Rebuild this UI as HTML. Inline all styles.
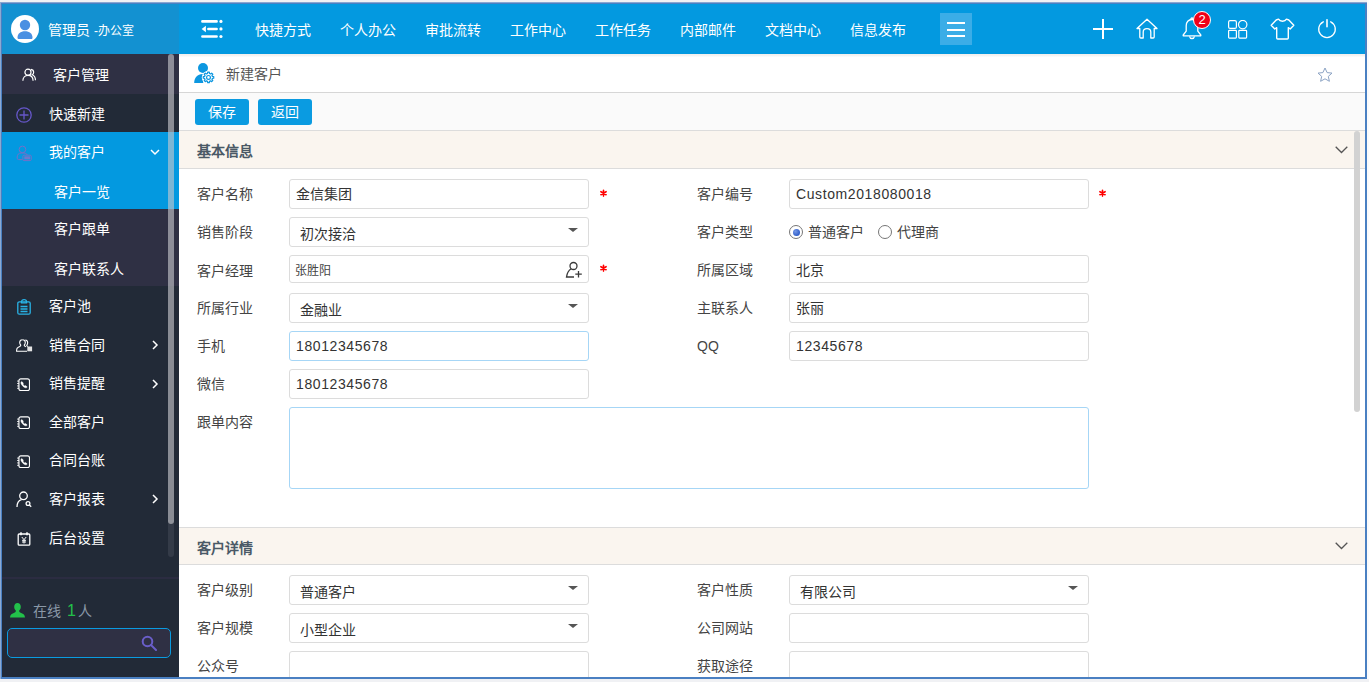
<!DOCTYPE html>
<html lang="zh-CN">
<head>
<meta charset="utf-8">
<title>新建客户</title>
<style>
*{box-sizing:border-box;margin:0;padding:0}
html,body{width:1369px;height:682px;overflow:hidden;background:#f0f1f4;font-family:"Liberation Sans",sans-serif;font-size:14px;color:#444}
.abs{position:absolute}
#frame{position:absolute;left:0;top:2px;width:1367px;height:677px;background:#4a80c2}
#app{position:absolute;left:2px;top:4px;width:1363px;height:673px;background:#fff;overflow:hidden}
/* header */
#hd{position:absolute;left:0;top:0;width:1363px;height:50px;background:#0399e0;color:#fff}
#hd .user{position:absolute;left:0;top:0;width:177px;height:50px;background:#1391d1}
#hd .avatar{position:absolute;left:9px;top:11px;width:28px;height:28px;border-radius:50%;background:#fff;overflow:hidden}
#hd .uname{position:absolute;left:46px;top:0;line-height:52px;font-size:14px;white-space:nowrap}
#hd .nav{position:absolute;top:0;width:85px;text-align:center;line-height:53px;font-size:14px;white-space:nowrap}
#hd .mbtn{position:absolute;left:938px;top:9px;width:32px;height:32px;background:#3bade7}
#hd .mbtn i{position:absolute;left:6.600px;width:18.400px;height:1.800px;background:#fff}
/* sidebar */
#sb{position:absolute;left:0;top:50px;width:177px;height:623px;background:#222a37;color:#fff}
#sb .it{position:absolute;left:0;width:166px;font-size:14px;white-space:nowrap}
#sb .it span{position:absolute;left:45px;top:0}
#sb .lt{background:#2f3044}
#sb .act{background:#0399e0;width:177px}
#sb svg{position:absolute}
/* content */
#ct{position:absolute;left:177px;top:50px;width:1186px;height:623px;background:#fff}
.band{position:absolute;left:0;width:1186px;height:38px;background:#faf5ef;border-top:1px solid #dcdcdc;border-bottom:1px solid #dcdcdc}
.band b{position:absolute;left:18px;top:1px;line-height:38px;font-size:14px;color:#4a5966;font-weight:bold}
.lb{position:absolute;font-size:14px;color:#444;white-space:nowrap;line-height:30px;height:30px}
.in{position:absolute;width:300px;height:30px;border:1px solid #dcdcdc;border-radius:3px;background:#fff;font-size:14px;color:#333;line-height:28px;padding-left:6px;white-space:nowrap}
.in.sel{padding-left:10px;line-height:32px}
.in.sel:after{content:"";position:absolute;right:10.500px;top:10px;border-left:5px solid transparent;border-right:5px solid transparent;border-top:4.500px solid #555}
.in.num{letter-spacing:.6px}
.in.foc{border-color:#a6d6f6}
.req{position:absolute;color:#f00;font-size:19px;font-weight:bold;line-height:19px}
.btn{position:absolute;top:45px;width:54px;height:26px;border-radius:3px;background:#0a9be1;color:#fff;text-align:center;line-height:27px;font-size:14px}
</style>
</head>
<body>
<div id="frame"></div>
<div class="abs" style="left:0;top:2px;width:1367px;height:1px;background:#88a7d3"></div>
<div class="abs" style="left:0;top:2px;width:1px;height:677px;background:#8ca9d2"></div>
<div class="abs" style="left:1367px;top:0;width:2px;height:679px;background:#fbfbfc"></div>
<div id="app">

<!-- HEADER -->
<div id="hd">
  <div class="user">
    <div class="avatar"><svg width="28" height="28" viewBox="0 0 28 28"><circle cx="14" cy="10" r="5.2" fill="#4a90e2"/><path d="M6.5 22.5c0-4 3-6.3 7.5-6.3s7.500 2.300 7.500 6.300c0 1-.5 1.500-1.500 1.500h-12c-1 0-1.500-.5-1.500-1.500z" fill="#4a90e2"/></svg></div>
    <div class="uname">管理员 <span style="font-size:12px">-办公室</span></div>
  </div>
  <svg class="abs" style="left:198px;top:14px" width="24" height="22" viewBox="0 0 24 22" fill="none" stroke="#fff" stroke-width="2.600" stroke-linecap="round"><path d="M2.400 3.400h14.200M8.400 10.950h8.200M2.400 18.500h14.200"/><path d="M1.600 10.950l4.300-3.200v6.400z" fill="#fff" stroke="none"/><circle cx="20.950" cy="3.400" r="1.600" fill="#fff" stroke="none"/><circle cx="20.950" cy="10.950" r="1.600" fill="#fff" stroke="none"/><circle cx="20.950" cy="18.500" r="1.600" fill="#fff" stroke="none"/></svg>
  <div class="nav" style="left:238px">快捷方式</div>
  <div class="nav" style="left:323px">个人办公</div>
  <div class="nav" style="left:408px">审批流转</div>
  <div class="nav" style="left:493px">工作中心</div>
  <div class="nav" style="left:578px">工作任务</div>
  <div class="nav" style="left:663px">内部邮件</div>
  <div class="nav" style="left:748px">文档中心</div>
  <div class="nav" style="left:833px">信息发布</div>
  <div class="mbtn"><i style="top:9.200px"></i><i style="top:16.100px"></i><i style="top:22.400px"></i></div>
  <div id="icons">
    <svg class="abs" style="left:1091px;top:15px" width="20" height="20" viewBox="0 0 20 20" fill="none" stroke="#fff" stroke-width="2"><path d="M10 0v20M0 10h20"/></svg>
    <svg class="abs" style="left:1134px;top:14px" width="22" height="21" viewBox="0 0 22 21" fill="none" stroke="#fff" stroke-width="1.300" stroke-linejoin="round"><path d="M1 10.500L11 1.200l10 9.300h-2.800v8.500c0 .6-.4 1-1 1h-2.400v-6c0-2-1.500-3.300-3.800-3.300S7.200 12 7.200 14v6H4.800c-.6 0-1-.4-1-1v-8.500z"/></svg>
    <svg class="abs" style="left:1180px;top:13px" width="20" height="23" viewBox="0 0 20 23" fill="none" stroke="#fff" stroke-width="1.300" stroke-linejoin="round"><path d="M10 2.500c-3.600 0-5.800 2.600-5.800 6.200v5.500L1.200 18v.8h17.600V18l-3-3.800V8.700c0-3.600-2.200-6.200-5.800-6.200z"/><path d="M7.500 19.300c.3 1.400 1.200 2.200 2.500 2.200s2.200-.8 2.500-2.200"/><path d="M8.800 2.500c0-1 .5-1.500 1.200-1.500s1.200.5 1.200 1.500"/></svg>
    <div class="abs" style="left:1191px;top:7px;width:18px;height:18px;border-radius:50%;background:#f00018;border:1.500px solid #fff;color:#fff;font-size:13px;line-height:15px;text-align:center">2</div>
    <svg class="abs" style="left:1226px;top:16px" width="20" height="19" viewBox="0 0 20 19" fill="none" stroke="#fff" stroke-width="1.200"><rect x=".6" y=".6" width="7.800" height="7.800" rx="1.500"/><circle cx="14.700" cy="4.600" r="4.200"/><rect x=".6" y="10.300" width="7.800" height="7.800" rx=".8"/><rect x="10.800" y="10.300" width="7.800" height="7.800" rx=".8"/></svg>
    <svg class="abs" style="left:1268px;top:14px" width="25" height="22" viewBox="0 0 25 22" fill="none" stroke="#fff" stroke-width="1.400" stroke-linejoin="round"><path d="M8.500 1.200c.8 1.300 2.200 2 4 2s3.200-.7 4-2l2.300.8 5 5.300-3.600 3.700-1.900-1.300v10.300c0 .6-.4 1-1 1H7.700c-.6 0-1-.4-1-1V9.700L4.800 11 1.200 7.300l5-5.300z"/></svg>
    <svg class="abs" style="left:1315px;top:15px" width="20" height="20" viewBox="0 0 20 20" fill="none" stroke="#fff" stroke-width="1.300" stroke-linecap="round"><path d="M6.300 2.800A8.300 8.300 0 1 0 13.700 2.800"/><path d="M10 .8v7" stroke-width="1.600"/></svg>
  </div>
</div>

<!-- SIDEBAR -->
<div id="sb">
  <div class="it lt" style="top:0;height:40px;line-height:43px;width:177px"><span style="left:51px">客户管理</span>
    <svg style="left:20px;top:13.500px" width="14.500" height="13.600" viewBox="0 0 17 16" fill="none" stroke="#fff" stroke-width="1.400"><circle cx="7" cy="5" r="3.600"/><path d="M1 15c0-4 2.500-6.300 6-6.300s6 2.300 6 6.300"/><path d="M10.500 1.600c2 .3 3.200 1.700 3.200 3.400 0 1.300-.7 2.400-1.700 3 2.200.900 3.800 3 3.800 6.500"/></svg></div>
  <div class="it" style="top:40px;height:38px;line-height:41px;width:177px"><span style="left:47px">快速新建</span>
    <svg style="left:13px;top:12.400px" width="18" height="18" viewBox="0 0 18 18" fill="none" stroke="#6657c9" stroke-width="1.300"><circle cx="9" cy="9" r="7.200"/><path d="M9 4.500v9M4.500 9h9"/></svg></div>
  <div class="it act" style="top:78px;height:77px;width:177px">
    <span style="left:47px;line-height:40px">我的客户</span>
    <span style="left:52px;top:39.500px;line-height:40px">客户一览</span>
    <svg style="left:14px;top:13px" width="17" height="17" viewBox="0 0 17 17" fill="none" stroke="#7471c8" stroke-width="1"><circle cx="6.450" cy="4.400" r="3.300"/><path d="M6.500 14.600H2.600c-.9 0-1.400-.5-1.400-1.400V12c0-2.400 1.600-4 3.800-4h3c1.500 0 2.700.8 3.300 2"/><rect x="6.900" y="10.200" width="8.300" height="5.400" rx="1"/><rect x="8.300" y="11.300" width="5.700" height="3.100" fill="#6f79cc" stroke="none"/></svg>
    <svg style="left:148px;top:17px" width="10" height="7" viewBox="0 0 10 7" fill="none" stroke="#fff" stroke-width="1.500"><path d="M1 1l4 4 4-4"/></svg>
  </div>
  <div class="it lt" style="top:155px;height:77px;width:177px">
    <span style="left:52px;line-height:40px">客户跟单</span>
    <span style="left:52px;top:40px;line-height:40px">客户联系人</span>
  </div>
  <div class="it" style="top:232px;height:39px;line-height:40px"><span style="left:47px">客户池</span>
    <svg style="left:15px;top:13px" width="14" height="16" viewBox="0 0 14 16" fill="none" stroke="#29b3e6" stroke-width="1.300"><rect x=".8" y="2.800" width="12.400" height="12.400" rx="1.500"/><path d="M4.500 2.800c0-1.300 1-2.100 2.500-2.100s2.500.8 2.500 2.100v1h-5z"/><path d="M3.500 7.500h7M3.500 10h7M3.500 12.500h7"/></svg></div>
  <div class="it" style="top:271px;height:39px;line-height:40px"><span style="left:47px">销售合同</span>
    <svg style="left:14px;top:14.300px" width="17" height="13" viewBox="0 0 17 13" fill="none" stroke="#fff" stroke-width="1.100"><path d="M6.500.7c-1.800 0-2.800 1.200-2.800 2.900 0 1.100.4 2 1.100 2.600-.2 1.100-1.200 1.600-2.500 2.100C1 8.800.6 9.500.6 11.300v.9h10.400"/><path d="M6.500.7c1.800 0 2.800 1.200 2.800 2.900 0 1.100-.4 2-1.100 2.600.2.800.8 1.300 1.700 1.600" /><path d="M9.300 1c1.500.2 2.400 1.300 2.400 2.800 0 1-.4 1.900-1 2.500.2.600.6 1 1.200 1.200"/><rect x="11.300" y="7.500" width="4.800" height="4.800" fill="#e4e4e4" stroke="none"/></svg>
    <svg style="left:150px;top:15px" width="7" height="10" viewBox="0 0 7 10" fill="none" stroke="#fff" stroke-width="1.500"><path d="M1 1l4 4-4 4"/></svg></div>
  <div class="it" style="top:310px;height:38px;line-height:39px"><span style="left:47px">销售提醒</span>
    <svg class="pb" style="left:15px;top:13.700px" width="13.200" height="13.400" viewBox="0 0 15 15" fill="none" stroke="#fff" stroke-width="1.300"><rect x="2.200" y=".8" width="12" height="13.400" rx="2.200"/><path d="M.2 3.400h2M.2 6.100h2M.2 8.900h2M.2 11.600h2" stroke-width="1.100"/><path d="M5.300 3.800c-.9.600-1.100 1.600-.5 2.900.8 1.700 2.300 3.200 4 4 1.300.6 2.300.4 2.900-.5l-1.700-1.700-1.100.6c-.9-.5-1.700-1.400-2.200-2.300l.6-1.100z" fill="#fff" stroke-width=".5"/></svg>
    <svg style="left:150px;top:15px" width="7" height="10" viewBox="0 0 7 10" fill="none" stroke="#fff" stroke-width="1.500"><path d="M1 1l4 4-4 4"/></svg></div>
  <div class="it" style="top:348px;height:39px;line-height:40px"><span style="left:47px">全部客户</span>
    <svg class="pb" style="left:15px;top:13.700px" width="13.200" height="13.400" viewBox="0 0 15 15" fill="none" stroke="#fff" stroke-width="1.300"><rect x="2.200" y=".8" width="12" height="13.400" rx="2.200"/><path d="M.2 3.400h2M.2 6.100h2M.2 8.900h2M.2 11.600h2" stroke-width="1.100"/><path d="M5.300 3.800c-.9.600-1.100 1.600-.5 2.900.8 1.700 2.300 3.200 4 4 1.300.6 2.300.4 2.900-.5l-1.700-1.700-1.100.6c-.9-.5-1.700-1.400-2.200-2.300l.6-1.100z" fill="#fff" stroke-width=".5"/></svg></div>
  <div class="it" style="top:387px;height:38px;line-height:39px"><span style="left:47px">合同台账</span>
    <svg class="pb" style="left:15px;top:13.700px" width="13.200" height="13.400" viewBox="0 0 15 15" fill="none" stroke="#fff" stroke-width="1.300"><rect x="2.200" y=".8" width="12" height="13.400" rx="2.200"/><path d="M.2 3.400h2M.2 6.100h2M.2 8.900h2M.2 11.600h2" stroke-width="1.100"/><path d="M5.300 3.800c-.9.600-1.100 1.600-.5 2.900.8 1.700 2.300 3.200 4 4 1.300.6 2.300.4 2.900-.5l-1.700-1.700-1.100.6c-.9-.5-1.700-1.400-2.200-2.300l.6-1.100z" fill="#fff" stroke-width=".5"/></svg></div>
  <div class="it" style="top:425px;height:39px;line-height:40px"><span style="left:47px">客户报表</span>
    <svg style="left:14px;top:12px" width="17" height="17" viewBox="0 0 17 17" fill="none" stroke="#fff" stroke-width="1.300"><circle cx="7.500" cy="4.800" r="3.800"/><path d="M1 16c0-4 1.800-6.500 4.500-7.300"/><circle cx="12" cy="12.500" r="1.900"/><path d="M13.400 14l1.800 1.800"/></svg>
    <svg style="left:150px;top:15px" width="7" height="10" viewBox="0 0 7 10" fill="none" stroke="#fff" stroke-width="1.500"><path d="M1 1l4 4-4 4"/></svg></div>
  <div class="it" style="top:464px;height:38px;line-height:40px"><span style="left:47px">后台设置</span>
    <svg style="left:15px;top:14px" width="14" height="14" viewBox="0 0 14 14" fill="none" stroke="#fff" stroke-width="1.300"><rect x="1.200" y="2" width="11.600" height="11.200" rx="1"/><path d="M4 .3v3M10 .3v3" stroke-width="1.500"/><path d="M4.800 5l2.200 2.700L9.200 5M7 7.700v3.800M5 8.300h4M5 10h4" stroke-width="1"/></svg></div>
  <div class="abs" style="left:166px;top:466px;width:6px;height:37px;border-radius:0 0 3px 3px;background:#343b48"></div>
  <div class="abs" style="left:166px;top:0;width:6px;height:470px;border-radius:3px;background:rgba(200,200,205,.62)"></div>
  <div class="abs" style="left:0;top:523px;width:177px;height:2px;background:#2b2c41"></div>
  <svg style="left:8px;top:549px" width="15" height="15" viewBox="0 0 15 15"><path d="M7.500 0c2 0 3.300 1.600 3.300 3.800 0 1.700-.7 3-1.600 3.800-.2 1.300.3 1.900 2 2.500 2.300.8 3.600 1.700 3.800 4.400H0c.2-2.700 1.500-3.600 3.800-4.400 1.700-.6 2.200-1.200 2-2.500-.9-.8-1.600-2.100-1.600-3.800C4.200 1.600 5.500 0 7.500 0z" fill="#22c04a"/></svg>
  <div class="abs" style="left:31px;top:546px;line-height:22px;font-size:14px;color:#8a98a7;white-space:nowrap">在线 <span style="color:#22c04a;font-size:16px;margin-left:2px">1</span><span style="margin-left:2px">人</span></div>
  <div class="abs" style="left:5px;top:574px;width:164px;height:30px;border:1px solid #0a9be1;border-radius:5px;background:#2f3044"></div>
  <svg style="left:139px;top:581px" width="16" height="16" viewBox="0 0 16 16" fill="none" stroke="#6a5ec9" stroke-width="2"><circle cx="6.500" cy="6.500" r="4.800"/><path d="M10 10l5 5" stroke-linecap="round"/></svg>
</div>

<!-- CONTENT -->
<div id="ct">
  <div class="abs" style="left:0;top:0;width:1186px;height:3px;background:linear-gradient(#f5eeeb,#f2f2f2 45%,#fdfdfd)"></div>
  <div class="abs" style="left:0;top:0;width:1186px;height:39px;border-bottom:1px solid #d6d6d6"></div>
  <svg class="abs" style="left:15px;top:9px" width="21" height="21" viewBox="0 0 21 21"><circle cx="9" cy="5" r="5" fill="#0c97e0"/><path d="M.2 20.100c.2-5.600 3.300-9.100 8.300-9.100 1.300 0 2.400.2 3.300.6l-3 4 .5 4.500z" fill="#0c97e0"/><circle cx="14.500" cy="14.400" r="6.700" fill="#fff"/><path d="M19.73 13.57 L19.73 15.23 L18.37 15.39 L17.94 16.44 L18.79 17.52 L17.62 18.69 L16.54 17.84 L15.49 18.27 L15.33 19.63 L13.67 19.63 L13.51 18.27 L12.46 17.84 L11.38 18.69 L10.21 17.52 L11.06 16.44 L10.63 15.39 L9.27 15.23 L9.27 13.57 L10.63 13.41 L11.06 12.36 L10.21 11.28 L11.38 10.11 L12.46 10.96 L13.51 10.53 L13.67 9.17 L15.33 9.17 L15.49 10.53 L16.54 10.96 L17.62 10.11 L18.79 11.28 L17.94 12.36 L18.37 13.41z" fill="#fff" stroke="#0c97e0" stroke-width="1.200" stroke-linejoin="round"/><circle cx="14.500" cy="14.400" r="1.900" fill="none" stroke="#0c97e0" stroke-width="1.200"/></svg>
  <div class="abs" style="left:47px;top:0;line-height:40px;font-size:14px;color:#555">新建客户</div>
  <svg class="abs" style="left:1138px;top:12.500px" width="16" height="15" viewBox="0 0 16 15" fill="none" stroke="#8ca3c4" stroke-width="1"><path d="M8 1l2.100 4.600 4.900.5-3.700 3.300 1.100 4.900L8 11.800l-4.400 2.500 1.100-4.900L1 6.100l4.900-.5z"/></svg>
  <div class="abs" style="left:0;top:39px;width:1186px;height:37px;background:#fafafa"></div>
  <div class="btn" style="left:16px">保存</div>
  <div class="btn" style="left:79px">返回</div>

  <div class="band" style="top:76px;height:39px"><b>基本信息</b>
    <svg class="abs" style="left:1156px;top:15px" width="13" height="8" viewBox="0 0 13 8" fill="none" stroke="#555" stroke-width="1.300"><path d="M.7.800l5.800 5.700L12.300.8"/></svg></div>

  <div class="lb" style="left:18px;top:125px">客户名称</div>
  <div class="in" style="left:110px;top:125px">金信集团</div>
  <svg class="abs" style="left:419.5px;top:134.5px" width="9" height="9" viewBox="0 0 9 9" stroke="#f00" stroke-width="1.600" stroke-linecap="round"><path d="M4.500 1.300v5.800M1.900 2.700l5.200 3M7.100 2.700l-5.200 3"/></svg>
  <div class="lb" style="left:518px;top:125px">客户编号</div>
  <div class="in num" style="left:610px;top:125px">Custom2018080018</div>
  <svg class="abs" style="left:919px;top:134.5px" width="9" height="9" viewBox="0 0 9 9" stroke="#f00" stroke-width="1.600" stroke-linecap="round"><path d="M4.500 1.300v5.800M1.900 2.700l5.200 3M7.100 2.700l-5.200 3"/></svg>

  <div class="lb" style="left:18px;top:163px">销售阶段</div>
  <div class="in sel" style="left:110px;top:163px">初次接洽</div>
  <div class="lb" style="left:518px;top:163px">客户类型</div>
  <div class="abs" style="left:610px;top:171px;width:14px;height:14px;border:1px solid #767676;border-radius:50%;background:#fff"><i style="position:absolute;left:2.500px;top:2.500px;width:7px;height:7px;border-radius:50%;background:radial-gradient(circle at 35% 35%,#7397e6,#2f5dc9 70%)"></i></div>
  <div class="lb" style="left:629px;top:163px">普通客户</div>
  <div class="abs" style="left:699px;top:171px;width:14px;height:14px;border:1px solid #767676;border-radius:50%;background:#fff"></div>
  <div class="lb" style="left:718px;top:163px">代理商</div>

  <div class="lb" style="left:18px;top:201px;height:28px;line-height:33px">客户经理</div>
  <div class="in" style="left:110px;top:201px;height:28px;line-height:31px;font-size:12px;color:#444;padding-left:5px">张胜阳
    <svg class="abs" style="right:5px;top:5px" width="18" height="18" viewBox="0 0 18 18" fill="none" stroke="#3a3a3a" stroke-width="1.300"><circle cx="8.500" cy="5" r="3.500"/><path d="M6.200 7.800C3.500 9.500 2 12.500 1.500 16h7.500"/><path d="M13.500 10v6.500M10.300 13.200h6.500"/></svg></div>
  <svg class="abs" style="left:419.5px;top:210px" width="9" height="9" viewBox="0 0 9 9" stroke="#f00" stroke-width="1.600" stroke-linecap="round"><path d="M4.500 1.300v5.800M1.900 2.700l5.200 3M7.100 2.700l-5.200 3"/></svg>
  <div class="lb" style="left:518px;top:201px;height:28px;line-height:31px">所属区域</div>
  <div class="in" style="left:610px;top:201px;height:28px;line-height:29px">北京</div>

  <div class="lb" style="left:18px;top:239px">所属行业</div>
  <div class="in sel" style="left:110px;top:239px">金融业</div>
  <div class="lb" style="left:518px;top:239px">主联系人</div>
  <div class="in" style="left:610px;top:239px">张丽</div>

  <div class="lb" style="left:18px;top:277px">手机</div>
  <div class="in num foc" style="left:110px;top:277px">18012345678</div>
  <div class="lb" style="left:518px;top:277px">QQ</div>
  <div class="in num" style="left:610px;top:277px">12345678</div>

  <div class="lb" style="left:18px;top:315px">微信</div>
  <div class="in num" style="left:110px;top:315px">18012345678</div>

  <div class="lb" style="left:18px;top:353px">跟单内容</div>
  <div class="in foc" style="left:110px;top:353px;width:800px;height:82px"></div>

  <div class="band" style="top:473px;height:38px"><b>客户详情</b>
    <svg class="abs" style="left:1156px;top:14px" width="13" height="8" viewBox="0 0 13 8" fill="none" stroke="#555" stroke-width="1.300"><path d="M.7.800l5.800 5.700L12.300.8"/></svg></div>

  <div class="lb" style="left:18px;top:521px">客户级别</div>
  <div class="in sel" style="left:110px;top:521px">普通客户</div>
  <div class="lb" style="left:518px;top:521px">客户性质</div>
  <div class="in sel" style="left:610px;top:521px">有限公司</div>

  <div class="lb" style="left:18px;top:559px">客户规模</div>
  <div class="in sel" style="left:110px;top:559px">小型企业</div>
  <div class="lb" style="left:518px;top:559px">公司网站</div>
  <div class="in" style="left:610px;top:559px"></div>

  <div class="lb" style="left:18px;top:597px">公众号</div>
  <div class="in" style="left:110px;top:597px"></div>
  <div class="lb" style="left:518px;top:597px">获取途径</div>
  <div class="in" style="left:610px;top:597px"></div>

  <div class="abs" style="left:1175px;top:77px;width:6px;height:281px;border-radius:3px;background:#d2d2d2"></div>
</div>

</div>
</body>
</html>
